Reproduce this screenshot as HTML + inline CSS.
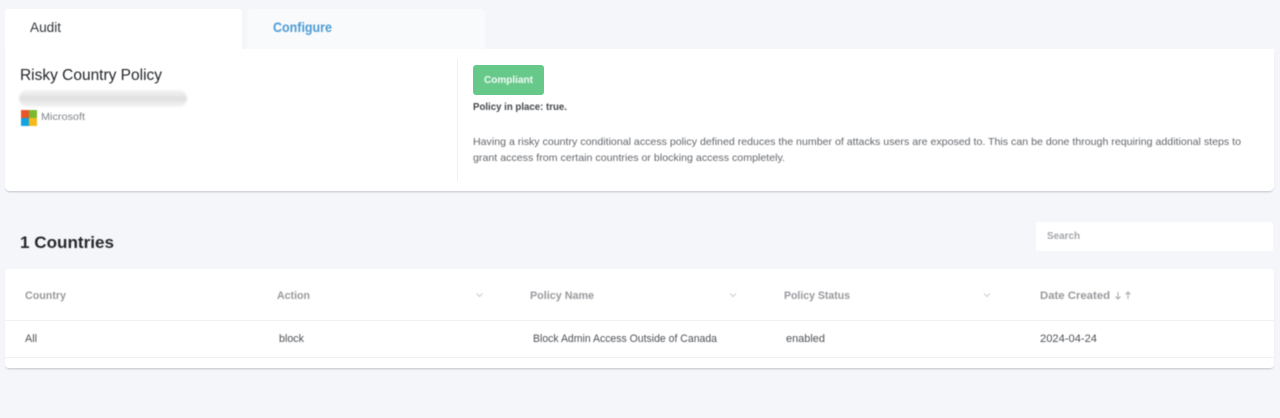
<!DOCTYPE html>
<html lang="en">
<head>
<meta charset="utf-8">
<title>Risky Country Policy</title>
<style>
html,body{margin:0;padding:0;width:1280px;height:418px;overflow:hidden;background:#f5f6f9;font-family:"Liberation Sans",sans-serif}
.b{position:absolute}
svg{position:absolute;left:0;top:0;filter:blur(.4px)}
text{font-family:"Liberation Sans",sans-serif}
</style>
</head>
<body>
<div class="b" style="left:247px;top:9px;width:238px;height:40px;background:#f9fafc;border-radius:4px 4px 0 0"></div>
<div class="b" style="left:5px;top:49px;width:1269px;height:142px;background:#fff;border-radius:0 0 5px 5px;box-shadow:0 2px 2px -1px rgba(70,80,100,.3)"></div>
<div class="b" style="left:5px;top:9px;width:237px;height:42px;background:#fff;border-radius:4px 4px 0 0"></div>
<div class="b" style="left:457px;top:59px;width:1px;height:122px;background:#eeeff0"></div>
<div class="b" style="left:473px;top:65px;width:71px;height:30px;background:#66c98a;border-radius:3px"></div>
<div class="b" style="left:19px;top:90px;width:168px;height:17px;border-radius:9px;background:linear-gradient(#f5f5f5,#e0e0e0 50%,#f5f5f5);filter:blur(1px)"></div>
<div class="b" style="left:1036px;top:222px;width:237px;height:29px;background:#fff;border-radius:2px"></div>
<div class="b" style="left:5px;top:269px;width:1269px;height:99px;background:#fff;border-radius:4px;box-shadow:0 2px 2px -1px rgba(70,80,100,.3)"></div>
<div class="b" style="left:5px;top:320px;width:1269px;height:1px;background:#f0f1f2"></div>
<div class="b" style="left:5px;top:357px;width:1269px;height:1px;background:#f0f1f2"></div>

<svg width="1280" height="418" viewBox="0 0 1280 418">
  <g>
    <rect x="21" y="110" width="8" height="8" fill="#e8562a"/>
    <rect x="29" y="110" width="8" height="8" fill="#7cb82f"/>
    <rect x="21" y="118" width="8" height="8" fill="#12a3e0"/>
    <rect x="29" y="118" width="8" height="8" fill="#f6b91d"/>
  </g>

  <text x="30" y="32" font-size="13.5" fill="#33363c" textLength="31" lengthAdjust="spacingAndGlyphs">Audit</text>
  <text x="273" y="32" font-size="13.5" font-weight="700" fill="#4a9bd4" textLength="59" lengthAdjust="spacingAndGlyphs">Configure</text>

  <text x="20" y="80" font-size="15.5" fill="#22252a" textLength="142" lengthAdjust="spacingAndGlyphs">Risky Country Policy</text>
  <text x="41" y="120" font-size="10.5" fill="#80848a" textLength="44" lengthAdjust="spacingAndGlyphs">Microsoft</text>

  <text x="484" y="83" font-size="10" font-weight="700" fill="#f4fbf6" textLength="49" lengthAdjust="spacingAndGlyphs">Compliant</text>
  <text x="473" y="110" font-size="10" font-weight="700" fill="#43464b" textLength="94" lengthAdjust="spacingAndGlyphs">Policy in place: true.</text>
  <text x="473" y="145" font-size="10.5" fill="#63666b" textLength="768" lengthAdjust="spacingAndGlyphs">Having a risky country conditional access policy defined reduces the number of attacks users are exposed to. This can be done through requiring additional steps to</text>
  <text x="473" y="161" font-size="10.5" fill="#63666b" textLength="312" lengthAdjust="spacingAndGlyphs">grant access from certain countries or blocking access completely.</text>

  <text x="20" y="248" font-size="17" font-weight="700" fill="#24272c" textLength="94" lengthAdjust="spacingAndGlyphs">1 Countries</text>
  <text x="1047" y="239" font-size="10" font-weight="700" fill="#a2a5a9" textLength="33" lengthAdjust="spacingAndGlyphs">Search</text>

  <g font-size="11" font-weight="700" fill="#97999d">
    <text x="25" y="299" textLength="41" lengthAdjust="spacingAndGlyphs">Country</text>
    <text x="277" y="299" textLength="33" lengthAdjust="spacingAndGlyphs">Action</text>
    <text x="530" y="299" textLength="64" lengthAdjust="spacingAndGlyphs">Policy Name</text>
    <text x="784" y="299" textLength="66" lengthAdjust="spacingAndGlyphs">Policy Status</text>
    <text x="1040" y="299" textLength="70" lengthAdjust="spacingAndGlyphs">Date Created</text>
  </g>

  <g fill="none" stroke="#c9cbce" stroke-width="1">
    <path d="M476.500 293.500l3 3 3-3"/>
    <path d="M730 293.500l3 3 3-3"/>
    <path d="M984 293.500l3 3 3-3"/>
  </g>
  <g fill="none" stroke="#a5a7ab" stroke-width="1">
    <path d="M1118 292v7M1115.500 296.500l2.500 2.500 2.500-2.500"/>
    <path d="M1128 299v-7M1125.500 294.500l2.500-2.500 2.500 2.500"/>
  </g>

  <g font-size="11" fill="#4d5055">
    <text x="25" y="342" textLength="12" lengthAdjust="spacingAndGlyphs">All</text>
    <text x="279" y="342" textLength="25" lengthAdjust="spacingAndGlyphs">block</text>
    <text x="533" y="342" textLength="184" lengthAdjust="spacingAndGlyphs">Block Admin Access Outside of Canada</text>
    <text x="786" y="342" textLength="39" lengthAdjust="spacingAndGlyphs">enabled</text>
    <text x="1040" y="342" textLength="57" lengthAdjust="spacingAndGlyphs">2024-04-24</text>
  </g>
</svg>
</body>
</html>
